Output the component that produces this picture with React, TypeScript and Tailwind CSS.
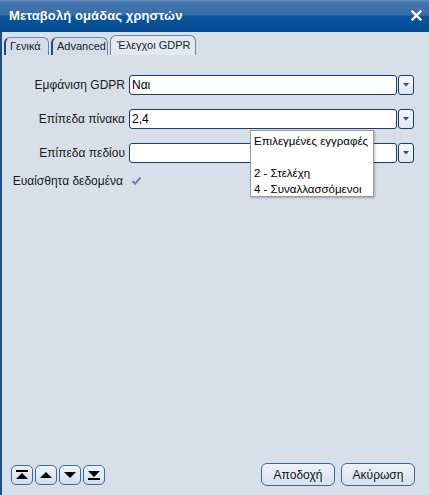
import React from "react";

const DropBtn = () => (
  <div className="w-[16px] h-[20px] ml-[1px] border border-[#1f3a68] rounded-[3px] bg-[linear-gradient(to_bottom,#f4f7fb,#dfe7f1)] flex items-center justify-center">
    <svg width="6" height="4" viewBox="0 0 6 4"><path d="M0 0H6L3 3.5Z" fill="#3a4a60" /></svg>
  </div>
);

const Row = ({ label, value }: { label: string; value?: string }) => (
  <div className="flex items-center h-[20px]">
    <div className="w-[127px] pr-[4px] text-right text-[12px] text-[#1a1a1a] whitespace-nowrap">{label}</div>
    <div className="w-[268px] h-[20px] border border-[#1f3a68] rounded-[3px] bg-white flex items-center pl-[2px] text-[12px] text-black">
      {value}
    </div>
    <DropBtn />
  </div>
);

const NavBtn = ({ children }: { children: React.ReactNode }) => (
  <div className="w-[22px] h-[20px] border border-[#3f6a9a] rounded-[5px] bg-[linear-gradient(to_bottom,#eef3f9,#d3deea)] flex items-center justify-center">
    {children}
  </div>
);

export default function App() {
  return (
    <div
      className="w-[429px] h-[495px] bg-[#d7dfe9] flex flex-col relative overflow-hidden"
      style={{ fontFamily: '"Liberation Sans", Arial, sans-serif' }}
    >
      <div className="h-[32px] shrink-0 flex items-center justify-between pl-[9px] pr-[7px] bg-[linear-gradient(to_bottom,#6f95c0_0px,#4677b0_2px,#3a6ca6_15px,#0a559e_16px,#034b93_32px)]">
        <span className="text-white font-bold text-[13px] tracking-[0.1px]">Μεταβολή ομάδας χρηστών</span>
        <svg width="11" height="11" viewBox="0 0 11 11" className="mb-[1px]">
          <path d="M1.5 1.5L9.5 9.5M9.5 1.5L1.5 9.5" stroke="white" strokeWidth="2.4" strokeLinecap="square" />
        </svg>
      </div>
      <div className="flex-1 flex flex-col border-l-2 border-[#1f4c88]">
        <div className="flex items-end gap-[2px] pl-[2px] pt-[3px] h-[23px]">
          <div className="w-[45px] h-[18px] pl-[4px] rounded-t-[6px] border border-b-0 border-[#6c86a8] border-l-[#1f4a80] border-l-2 bg-[#d3dce8] text-[11px] text-[#222] flex items-center whitespace-nowrap">Γενικά</div>
          <div className="w-[57px] h-[18px] pl-[4px] rounded-t-[6px] border border-b-0 border-[#6c86a8] border-l-[#1f4a80] border-l-2 bg-[#d3dce8] text-[11px] text-[#222] flex items-center whitespace-nowrap">Advanced</div>
          <div className="w-[86px] h-[20px] pl-[6px] rounded-t-[6px] border border-b-0 border-[#6c86a8] bg-[#e2e9f2] text-[11px] text-[#222] flex items-center whitespace-nowrap">Έλεγχοι GDPR</div>
        </div>
        <div className="flex flex-col pt-[20px] gap-[14px]">
          <Row label="Εμφάνιση GDPR" value="Ναι" />
          <Row label="Επίπεδα πίνακα" value="2,4" />
          <Row label="Επίπεδα πεδίου" />
          <div className="flex items-center h-[16px] -mt-[4px]">
            <div className="w-[127px] pr-[6px] text-right text-[12px] text-[#1a1a1a] whitespace-nowrap">Ευαίσθητα δεδομένα</div>
            <div className="w-[14px] h-[14px] bg-[#d7dfe9] flex items-center justify-center">
              <svg width="11" height="10" viewBox="0 0 11 10"><path d="M1.5 5L4 7.8L9.5 1.5" stroke="#6a83a6" strokeWidth="2" fill="none" /></svg>
            </div>
          </div>
        </div>
        <div className="flex-1" />
        <div className="flex items-center justify-between pl-[9px] pr-[14px] pb-[9px]">
          <div className="flex gap-[2px]">
            <NavBtn>
              <svg width="12" height="10" viewBox="0 0 12 10"><rect x="0" y="0" width="12" height="2" fill="#000" /><path d="M0 9L6 3L12 9Z" fill="#000" /></svg>
            </NavBtn>
            <NavBtn>
              <svg width="12" height="8" viewBox="0 0 12 8"><path d="M0 7L6 1L12 7Z" fill="#000" /></svg>
            </NavBtn>
            <NavBtn>
              <svg width="12" height="8" viewBox="0 0 12 8"><path d="M0 1L6 7L12 1Z" fill="#000" /></svg>
            </NavBtn>
            <NavBtn>
              <svg width="12" height="10" viewBox="0 0 12 10"><path d="M0 1L6 7L12 1Z" fill="#000" /><rect x="0" y="8" width="12" height="2" fill="#000" /></svg>
            </NavBtn>
          </div>
          <div className="flex gap-[6px]">
            <div className="w-[74px] h-[23px] border border-[#3d6896] rounded-[6px] bg-[linear-gradient(to_bottom,#eef3f9,#d6e0ec)] flex items-center justify-center text-[12px] text-[#111]">Αποδοχή</div>
            <div className="w-[74px] h-[23px] border border-[#3d6896] rounded-[6px] bg-[linear-gradient(to_bottom,#eef3f9,#d6e0ec)] flex items-center justify-center text-[12px] text-[#111]">Ακύρωση</div>
          </div>
        </div>
      </div>
      <div className="absolute left-[250px] top-[130px] w-[124px] h-[67px] bg-white border border-[#9a9a9a] shadow-[1px_1px_2px_rgba(0,0,0,0.25)] px-[3px] pt-[2px] text-[11.5px] leading-[16px] text-black whitespace-nowrap overflow-hidden">
        <div>Επιλεγμένες εγγραφές</div>
        <div>&nbsp;</div>
        <div>2 - Στελέχη</div>
        <div>4 - Συναλλασσόμενοι</div>
      </div>
    </div>
  );
}
